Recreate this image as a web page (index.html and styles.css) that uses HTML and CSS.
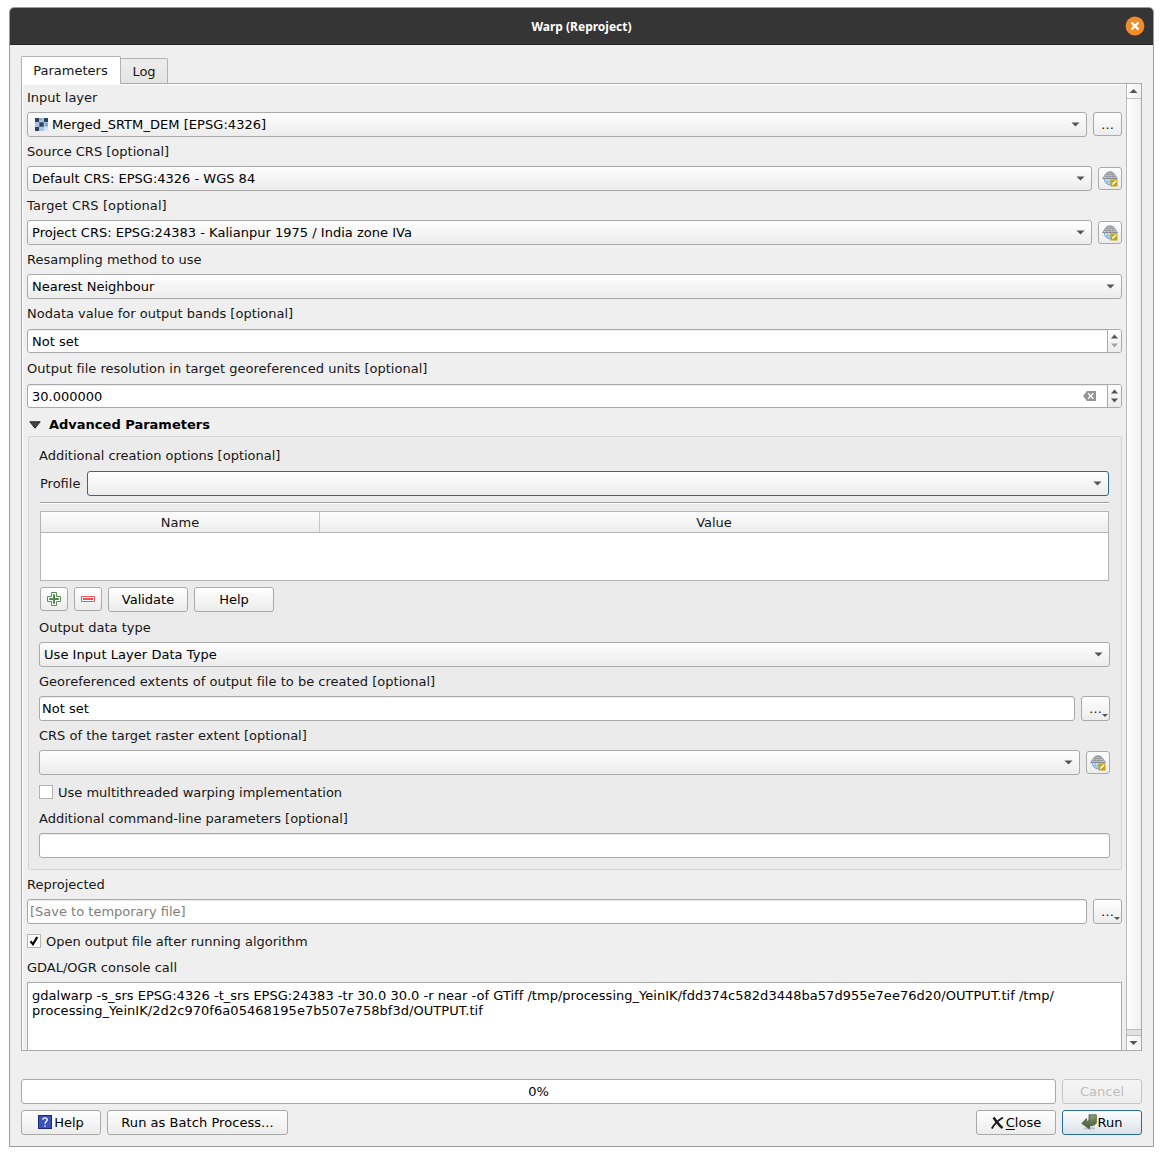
FILE: index.html
```html
<!DOCTYPE html>
<html lang="en">
<head>
<meta charset="utf-8">
<title>Warp (Reproject)</title>
<link rel="stylesheet" href="styles.css">
</head>
<body>
<svg width="0" height="0" class="defs">
  <defs>
    <linearGradient id="run-fill" x1="0" y1="0" x2="0" y2="1"><stop offset="0" stop-color="#93a27e"/><stop offset="0.5" stop-color="#64784f"/><stop offset="1" stop-color="#4c5c3a"/></linearGradient>
    <symbol id="globe" viewBox="0 0 16 16">
      <path d="M2.200 7.500A5.800 6.400 0 0 0 13.800 7.500Z" fill="#c3e2fc" stroke="#6a9cc4" stroke-width=".9"/>
      <path d="M8 8v6M5 8c.2 2.500 1 4.500 2 6M3.500 11h9" fill="none" stroke="#7eadd3" stroke-width=".7"/>
      <path d="M.5 7.500C2.500 6 3 1 8 .8c5 .2 5.500 5.200 7.500 6.700Z" fill="#c9cccf" stroke="#82888c" stroke-width=".9"/>
      <path d="M8 1V8M4.800 7.500C5 5 5.600 3 6.800 1M11.200 7.500C11 5 10.400 3 9.200 1M3.500 3.500h9M2.200 5.500h11.600" fill="none" stroke="#858b90" stroke-width=".7"/>
      <rect x="8.500" y="8.500" width="7" height="7" rx=".6" fill="#c5a211"/>
      <path d="M9.800 14.200l.7-2.200 3.200-2.700 1 .9-2.900 3z" fill="#fff"/>
    </symbol>
  </defs>
</svg>
<div class="window">
  <header class="titlebar">
    <span class="title">Warp (Reproject)</span>
    <svg class="close" width="20" height="20" viewBox="0 0 20 20"><circle cx="10" cy="10" r="9.400" fill="#f38b2a"/><path d="M6.500 6.500l7 7M13.500 6.500l-7 7" stroke="#fff" stroke-width="2.400"/></svg>
  </header>
  <main class="body">
    <nav class="tabs"><div class="tab active">Parameters</div><div class="tab">Log</div></nav>
    <section class="pane">
      <div class="form">
        <label class="lbl">Input layer</label>
        <div class="row">
          <div class="combo"><svg class="raster" width="13" height="13" viewBox="0 0 13 13" shape-rendering="crispEdges"><path fill="#a9c3e0" d="M0 0h13v13H0z"/><path fill="#2f4257" d="M0 0h4v4H0zM9 0h4v4H9zM0 9h4v4H0z"/><path fill="#59728f" d="M4 4h5v5H4z"/><path fill="#2f4257" d="M5 5h3v3H5z"/><path fill="#d7e4f3" d="M9 9h4v4H9z"/><path fill="#86a6ca" d="M4 0h3v2H4zM10 5h3v3h-3z"/></svg><span class="wider">Merged_SRTM_DEM [EPSG:4326]</span><i class="arrow"></i></div>
          <button class="tool dots">…</button>
        </div>
        <label class="lbl">Source CRS [optional]</label>
        <div class="row">
          <div class="combo"><span>Default CRS: EPSG:4326 - WGS 84</span><i class="arrow"></i></div>
          <button class="tool crs"><svg width="16" height="16"><use href="#globe"/></svg></button>
        </div>
        <label class="lbl widest">Target CRS [optional]</label>
        <div class="row">
          <div class="combo"><span class="wide">Project CRS: EPSG:24383 - Kalianpur 1975 / India zone IVa</span><i class="arrow"></i></div>
          <button class="tool crs"><svg width="16" height="16"><use href="#globe"/></svg></button>
        </div>
        <label class="lbl">Resampling method to use</label>
        <div class="row"><div class="combo"><span>Nearest Neighbour</span><i class="arrow"></i></div></div>
        <label class="lbl">Nodata value for output bands [optional]</label>
        <div class="spin"><span>Not set</span><div class="steps"><i class="arrow up"></i><i class="arrow off"></i></div></div>
        <label class="lbl wide">Output file resolution in target georeferenced units [optional]</label>
        <div class="spin"><span>30.000000</span>
          <svg class="clear" width="13" height="10" viewBox="0 0 13 10"><path d="M4 0h9v10H4L0 5z" fill="#959595"/><path d="M5 2.300l5.400 5.400M10.400 2.300L5 7.700" stroke="#fff" stroke-width="1.300"/></svg>
          <div class="steps"><i class="arrow up"></i><i class="arrow"></i></div></div>
        <div class="section"><svg width="12" height="8" viewBox="0 0 12 8"><path d="M.8.800h10.400L6 7.200z" fill="#444" stroke="#222"/></svg>Advanced Parameters</div>
        <div class="group">
          <label class="lbl">Additional creation options [optional]</label>
          <div class="options">
            <div class="row profile"><span class="name">Profile</span><div class="combo focus"><i class="arrow"></i></div></div>
            <div class="rule"></div>
            <div class="table"><div class="thead"><div class="th first">Name</div><div class="th">Value</div></div></div>
            <div class="buttons">
              <button class="tool edit"><svg width="14" height="14" viewBox="0 0 14 14"><path d="M4.500.500h5v4h4v5h-4v4h-5v-4h-4v-5h4z" fill="#fff" stroke="#5a8f5a"/><path d="M7 2.200v9.600M2.200 7h9.600" stroke="#4f8a52" stroke-width="2"/></svg></button>
              <button class="tool edit"><svg width="14" height="6" viewBox="0 0 14 6"><path d="M.5.500h13v5H.5z" fill="#fff" stroke="#ee5558"/><path d="M2 3h10" stroke="#ee5055" stroke-width="2"/></svg></button>
              <button class="btn">Validate</button>
              <button class="btn">Help</button>
            </div>
          </div>
          <label class="lbl">Output data type</label>
          <div class="row"><div class="combo"><span class="wider">Use Input Layer Data Type</span><i class="arrow"></i></div></div>
          <label class="lbl wide">Georeferenced extents of output file to be created [optional]</label>
          <div class="row"><div class="field">Not set</div><button class="tool dots menu">…<i class="arrow small"></i></button></div>
          <label class="lbl">CRS of the target raster extent [optional]</label>
          <div class="row"><div class="combo"><i class="arrow"></i></div><button class="tool crs"><svg width="16" height="16"><use href="#globe"/></svg></button></div>
          <div class="check"><span class="box"></span>Use multithreaded warping implementation</div>
          <label class="lbl">Additional command-line parameters [optional]</label>
          <div class="field"></div>
        </div>
        <label class="lbl">Reprojected</label>
        <div class="row"><div class="field hint">[Save to temporary file]</div><button class="tool dots menu">…<i class="arrow small"></i></button></div>
        <div class="check"><span class="box"><svg width="10" height="10" viewBox="0 0 10 10"><path d="M1.500 5.200L4 8.200 8.200 1" fill="none" stroke="#000" stroke-width="2.200"/></svg></span>Open output file after running algorithm</div>
        <label class="lbl">GDAL/OGR console call</label>
        <div class="console"><span class="wide">gdalwarp -s_srs EPSG:4326 -t_srs EPSG:24383 -tr 30.0 30.0 -r near -of GTiff /tmp/processing_YeinIK/fdd374c582d3448ba57d955e7ee76d20/OUTPUT.tif /tmp/</span><br><span class="wider">processing_YeinIK/2d2c970f6a05468195e7b507e758bf3d/OUTPUT.tif</span></div>
      </div>
      <div class="scrollbar"><div class="sb-btn"><i class="arrow up"></i></div><div class="thumb"></div><div class="groove"></div><div class="sb-btn"><i class="arrow"></i></div></div>
    </section>
    <footer class="footer">
      <div class="row"><div class="progress">0%</div><button class="btn disabled">Cancel</button></div>
      <div class="row">
        <button class="btn"><svg class="lift" width="14" height="14" viewBox="0 0 14 14"><rect x=".5" y=".5" width="13" height="13" fill="#3d52b5" stroke="#1c2b78"/><path d="M4.700 4.800C4.900 2.200 9.500 2.300 9.300 4.900 9.200 6.500 7 6.600 7 8.800M7 10.200v1.600" fill="none" stroke="#fff" stroke-width="1.300"/></svg><span class="help-cap">Help</span></button>
        <button class="btn batch">Run as Batch Process...</button>
        <span class="spacer"></span>
        <button class="btn"><svg class="cross" width="15" height="14" viewBox="0 0 15 14"><path d="M3.500 1.500C5.500 4 8.500 9 12.500 12" fill="none" stroke="#1c1c1c" stroke-width="2.600"/><path d="M13 1.500C8.500 4 4.500 8 1.800 12.500" fill="none" stroke="#1c1c1c" stroke-width="1.900"/></svg><span><u>C</u>lose</span></button>
        <button class="btn default"><svg class="run" width="16" height="16" viewBox="0 0 16 16"><ellipse cx="8.500" cy="14.300" rx="6" ry="1.300" fill="#bcc2c6"/><path d="M8 .800h7.300v7.500C15 10.500 13 11.800 8.500 11.800v3L.8 9.500 5.500 4.500v2.800C7.500 7.300 8 6.500 8 5z" fill="url(#run-fill)" stroke="#46543a" stroke-width=".8"/></svg><span>Run</span></button>
      </div>
    </footer>
  </main>
</div>
</body>
</html>
```
FILE: styles.css
```css
* { box-sizing: border-box; }
body {
  margin: 0;
  padding: 7px 0 0 9px;
  background: #fff;
  color: #161616;
  font: 13px/15px "DejaVu Sans", sans-serif;
}
svg { display: block; flex: none; }
.defs { position: absolute; }
button { font: inherit; color: inherit; margin: 0; padding: 0; }
.wide { letter-spacing: 0.021px; }
.wider { letter-spacing: 0.05px; }
.widest { letter-spacing: 0.1px; }

.window {
  width: 1145px;
  height: 1140px;
  border: 1px solid #9b9b9b;
  border-radius: 5px 5px 0 0;
  background: #efefef;
  overflow: hidden;
  display: flex;
  flex-direction: column;
}
.titlebar {
  height: 37px;
  background: #353535;
  border-bottom: 1px solid #242424;
  display: grid;
  grid-template-columns: 1fr auto 1fr;
  align-items: center;
}
.title { grid-column: 2; padding-top: 1px; color: #fff; font: bold 12px/18px "Noto Sans", sans-serif; }
.close { justify-self: end; margin-right: 8px; }

.body { padding: 11px 11px 0; display: flex; flex-direction: column; }
.tabs { display: flex; align-items: flex-end; height: 27px; }
.tab {
  height: 25px;
  width: 47px;
  padding-top: 5px;
  text-align: center;
  border: 1px solid #b2b2b2;
  border-left: 0;
  border-bottom: 0;
  border-radius: 0 2px 0 0;
  background: linear-gradient(#ececec, #e5e5e5);
}
.tab.active {
  width: 100px;
  height: 28px;
  margin-bottom: -1px;
  padding: 6px 1px 0 0;
  border-left: 1px solid #b2b2b2;
  border-radius: 2px 2px 0 0;
  background: #fff;
  position: relative;
}
.pane {
  width: 1121px;
  height: 968px;
  border: 1px solid #aaa;
  box-shadow: inset 1px 1px #fff;
  overflow: hidden;
  display: flex;
}
.form { width: 1104px; padding: 5px 4px 0 5px; display: flex; flex-direction: column; gap: 6px; flex: none; }
.lbl { display: block; height: 17px; padding-top: 1px; white-space: nowrap; flex: none; }
.row { display: flex; gap: 6px; height: 25px; flex: none; }
.row.profile { gap: 7px; }

.combo, .field, .btn, .tool, .progress {
  border: 1px solid #a9a9a9;
  border-radius: 3px;
}
.combo, .btn, .tool { background: linear-gradient(#fefefe, #ececec); }
.combo { flex: 1; height: 25px; display: flex; align-items: center; padding: 0 6px 0 4px; color: #000; }
.combo .arrow { margin-left: auto; }
.combo.focus { border-color: #2a6b9c; }
.raster { margin: 0 4px 0 3px; }
.arrow {
  display: block;
  width: 9px;
  height: 5px;
  background: #555;
  clip-path: polygon(5% 10%, 95% 10%, 50% 90%);
  flex: none;
}
.arrow.up { clip-path: polygon(5% 90%, 50% 10%, 95% 90%); }
.arrow.off { background: #a5a5a5; }
.field { flex: 1 0 auto; height: 25px; background: #fff; padding: 4px 2px; color: #000; box-shadow: inset 0 1px #ececec; }
.hint { color: #808080; }
.tool { display: flex; align-items: center; justify-content: center; flex: none; }
.dots { width: 29px; height: 24px; padding-top: 1px; }
.dots.menu { height: 25px; position: relative; padding-top: 0; }
.arrow.small { position: absolute; right: 1px; bottom: 3px; width: 6px; height: 3px; clip-path: polygon(0 0, 100% 0, 50% 100%); }
.crs { width: 24px; height: 23px; margin-top: 1px; }

.spin {
  height: 24px;
  margin: 1px 0;
  border: 1px solid #a9a9a9;
  border-radius: 3px;
  background: #fff;
  box-shadow: inset 0 1px #ececec;
  padding-left: 4px;
  display: flex;
  align-items: center;
  flex: none;
  color: #000;
}
.steps {
  width: 14px;
  height: 22px;
  border-left: 1px solid #a9a9a9;
  border-radius: 0 2px 2px 0;
  background: linear-gradient(#fefefe, #ececec);
  margin-left: auto;
  display: flex;
  flex-direction: column;
  align-items: center;
  justify-content: center;
  gap: 4px;
}
.steps .arrow { width: 8px; }
.clear { margin-left: auto; }
.clear + .steps { margin-left: 11px; }

.section { height: 15px; margin: 2px 0 -2px 2px; display: flex; align-items: center; gap: 8px; font-weight: bold; color: #000; }
.group {
  height: 434px;
  margin: 0 0 0 1px;
  padding: 10px 11px 0 10px;
  border: 1px solid #d5d5d5;
  border-radius: 2px;
  background: #ebebeb;
  display: flex;
  flex-direction: column;
  gap: 6px;
  flex: none;
}
.group > .field { flex: none; }
.options { height: 143px; padding: 1px 1px 0; display: flex; flex-direction: column; flex: none; }
.name { align-self: center; }
.rule { height: 2px; margin: 6px 0 7px; border-top: 1px solid #a0a0a0; background: #fff; flex: none; }
.table { height: 70px; border: 1px solid #b4b4b4; background: #fff; flex: none; }
.thead { height: 21px; display: flex; border-bottom: 1px solid #b4b4b4; background: linear-gradient(#fdfdfd, #ececec); }
.th { flex: 1; padding-top: 3px; text-align: center; }
.first { flex: none; width: 279px; border-right: 1px solid #c6c6c6; }
.buttons { display: flex; gap: 6px; margin-top: 6px; }
.edit { width: 28px; height: 24px; }
.btn { width: 80px; height: 25px; display: flex; align-items: center; justify-content: center; flex: none; color: #000; }
.check { height: 23px; padding-bottom: 1px; display: flex; align-items: center; gap: 5px; flex: none; }
.box { width: 14px; height: 14px; border: 1px solid #b4b4b4; background: #fff; display: grid; place-items: center; }
.console { height: 90px; border: 1px solid #aaa; background: #fff; padding: 5px 4px; color: #000; white-space: nowrap; flex: none; }

.scrollbar { width: 15px; border-left: 1px solid #b8b8b8; background: linear-gradient(90deg, #fff, #f0f0f0); display: flex; flex-direction: column; }
.sb-btn { height: 15px; padding-right: 1px; border-bottom: 1px solid #c2c2c2; display: grid; place-items: center; flex: none; }
.sb-btn:last-child { height: 14px; border: 0; }
.thumb { flex: 1; }
.groove { height: 7px; background: #e2e2e2; border: solid #bdbdbd; border-width: 1px 0; }

.footer { margin-top: 28px; display: flex; flex-direction: column; gap: 6px; }
.progress { flex: 1; background: #fff; text-align: center; padding-top: 4px; color: #000; }
.disabled { color: #bebebe; border-color: #c6c6c6; background: linear-gradient(#f5f5f5, #ededed); }
.batch { width: 181px; letter-spacing: 0.05px; }
.spacer { flex: 1; }
.default { border-color: #2a6b9c; background: linear-gradient(#fcfdfe, #dbe2e9); }
.help-cap { margin-left: 2px; }
.lift { margin-bottom: 1px; }
.run { margin: 0 1px 1px -1px; }
.cross { margin: 0 1px 0 -1px; }
u { text-underline-offset: 2px; }
```
